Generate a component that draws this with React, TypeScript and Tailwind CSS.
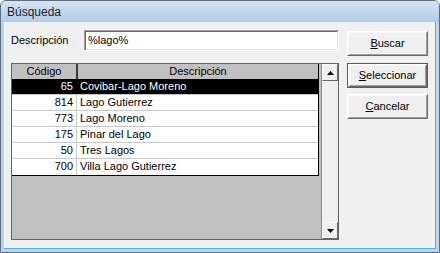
import React from "react";

const rows = [
  { code: "65", desc: "Covibar-Lago Moreno", selected: true },
  { code: "814", desc: "Lago Gutierrez" },
  { code: "773", desc: "Lago Moreno" },
  { code: "175", desc: "Pinar del Lago" },
  { code: "50", desc: "Tres Lagos" },
  { code: "700", desc: "Villa Lago Gutierrez" },
];

// classic raised 3d button
const WinButton = ({
  label,
  hotkey,
  isDefault,
  className = "",
}: {
  label: string;
  hotkey: string;
  isDefault?: boolean;
  className?: string;
}) => {
  const rest = label.slice(1);
  return (
    <div
      className={`w-[81px] h-[25px] ${
        isDefault ? "border border-[#5a5a5a]" : ""
      } ${className}`}
    >
      <div className="w-full h-full border border-t-white border-l-white border-b-[#696969] border-r-[#696969]">
        <div className="w-full h-full border border-t-[#f8f8f8] border-l-[#f8f8f8] border-b-[#a0a0a0] border-r-[#a0a0a0] bg-[#f0f0f0] flex items-center justify-center text-black leading-none">
          <span>
            <span className="underline">{hotkey}</span>
            {rest}
          </span>
        </div>
      </div>
    </div>
  );
};

const Arrow = ({ down }: { down?: boolean }) => (
  <svg width="7" height="4" viewBox="0 0 7 4" className={down ? "rotate-180" : ""}>
    <polygon points="3.5,0 7,4 0,4" fill="#000" />
  </svg>
);

const ScrollButton = ({ down }: { down?: boolean }) => (
  <div className="h-[17px] w-full border border-t-[#f8f8f8] border-l-[#f8f8f8] border-b-[#696969] border-r-[#696969] bg-[#f0f0f0] flex items-center justify-center">
    <Arrow down={down} />
  </div>
);

export default function App() {
  return (
    <div className="w-[440px] h-[253px] flex flex-col bg-[#bcd3ec] border border-[#5f6e7e] rounded-t-[6px] overflow-hidden font-['Liberation_Sans',Arial,sans-serif] text-[11px]">
      {/* Title bar */}
      <div className="h-[21px] shrink-0 bg-gradient-to-b from-[#d4e4f5] to-[#b2cbe7] px-[6px] flex items-center text-[12px] text-[#1e1e1e]">
        Búsqueda
      </div>

      {/* Body */}
      <div className="flex-1 mx-[3px] mb-[3px] bg-[#f0f0f0] border-b border-r border-[#4ab8dc] pl-[7px] pt-[8px]">
        {/* Search row */}
        <div className="flex items-start">
          <div className="w-[73px] mt-[3px] leading-[14px] text-black">Descripción</div>
          <div className="w-[255px] h-[21px] border border-t-[#a0a0a0] border-l-[#a0a0a0] border-b-white border-r-white">
            <div className="w-full h-full border border-t-[#696969] border-l-[#696969] border-b-[#e3e3e3] border-r-[#e3e3e3] bg-white pl-[2px] flex items-center text-black">
              %lago%
            </div>
          </div>
          <WinButton label="Buscar" hotkey="B" className="ml-[8px] mt-[1px]" />
        </div>

        {/* Grid + actions */}
        <div className="flex items-start mt-[7px]">
          <div className="w-[328px] h-[177px] border border-[#646464] flex">
            <div className="flex-1 bg-[#c0c0c0]">
              <div className="w-[307px] border-r border-b border-black">
                <div className="flex h-[15px] bg-[#c0c0c0] leading-[15px] text-black">
                  <div className="w-[64px] text-center">Código</div>
                  <div className="w-[2px] bg-[#3c3c3c]" />
                  <div className="flex-1 text-center">Descripción</div>
                </div>
                {rows.map((r, i) => (
                  <div
                    key={i}
                    className={`flex h-[16px] leading-[15px] ${
                      r.selected ? "bg-black text-white" : "bg-white text-black"
                    } ${i < rows.length - 1 ? "border-b border-[#c8c8c8]" : ""}`}
                  >
                    <div
                      className={`w-[65px] text-right pr-[3px] border-r ${
                        r.selected ? "border-black" : "border-[#c8c8c8]"
                      }`}
                    >
                      {r.code}
                    </div>
                    <div className="flex-1 pl-[3px]">{r.desc}</div>
                  </div>
                ))}
              </div>
            </div>
            <div className="w-[17px] flex flex-col border-l border-[#8a8a8a]">
              <ScrollButton />
              <div className="flex-1 bg-[#f0f0f0] border-r border-[#e6e6e6]" />
              <ScrollButton down />
            </div>
          </div>

          <div className="ml-[8px] flex flex-col gap-[6px]">
            <WinButton label="Seleccionar" hotkey="S" isDefault />
            <WinButton label="Cancelar" hotkey="C" />
          </div>
        </div>
      </div>
    </div>
  );
}
